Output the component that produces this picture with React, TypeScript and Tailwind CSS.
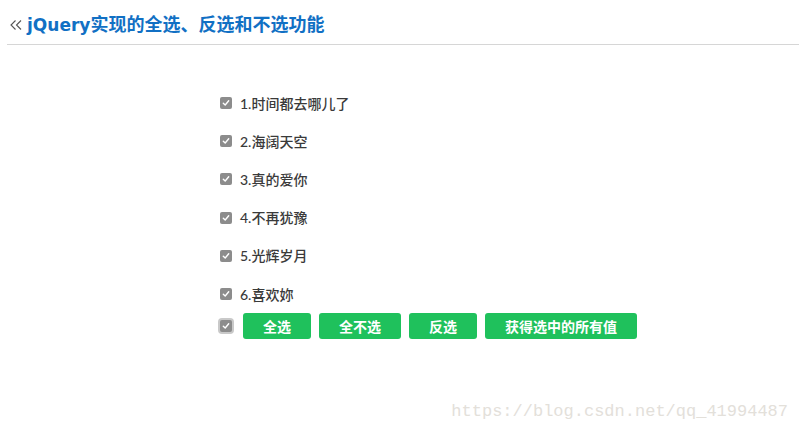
import React from "react";

const items = ["1.时间都去哪儿了", "2.海阔天空", "3.真的爱你", "4.不再犹豫", "5.光辉岁月", "6.喜欢妳"];
const buttons = ["全选", "全不选", "反选", "获得选中的所有值"];

function Check({ focused }: { focused?: boolean }) {
  const box = (
    <span className="flex h-[12px] w-[12px] items-center justify-center rounded-[2px] bg-[#8c8c8c]">
      <svg width="8" height="8" viewBox="0 0 8 8" fill="none">
        <path d="M1.3 4.2 L3.2 6 L6.7 1.8" stroke="white" strokeWidth="1.4" strokeLinecap="round" strokeLinejoin="round" />
      </svg>
    </span>
  );
  if (!focused) return box;
  return <span className="flex h-[16px] w-[16px] items-center justify-center rounded-[4px] bg-[#c9c9c9]">{box}</span>;
}

export default function App() {
  return (
    <div className="h-[437px] w-[799px] bg-white" style={{ fontFamily: '"Lato", "Noto Sans CJK SC", sans-serif' }}>
      <header className="ml-[7px] flex h-[45px] items-center border-b border-[#d6d6d6] pt-[6px] pb-[1px]">
        <svg className="ml-[3px] mr-[5px]" width="12" height="12" viewBox="0 0 12 12" fill="none">
          <path d="M5.5 1.5 L1 6 L5.5 10.5 M11 1.5 L6.5 6 L11 10.5" stroke="#555" strokeWidth="1.1" />
        </svg>
        <h1 className="text-[18px] font-bold text-[#1170c4]" style={{ fontFamily: '"Noto Sans CJK SC", sans-serif' }}>
          <span className="text-[17px]" style={{ fontFamily: '"DejaVu Sans", sans-serif' }}>jQuery</span>实现的全选、反选和不选功能
        </h1>
      </header>

      <div className="ml-[220px] mt-[39px] flex flex-col">
        {items.map((t) => (
          <div key={t} className="flex h-[38.2px] items-center gap-[8px]">
            <Check />
            <span className="text-[14px] font-medium text-[#3a3a3a]">{t}</span>
          </div>
        ))}
        <div className="-ml-[2px] flex items-center gap-[8px]">
          <Check focused />
          <div className="ml-[1px] flex gap-[8px]">
            {buttons.map((b) => (
              <button key={b} className="h-[26px] rounded-[3px] bg-[#1fc15c] px-[20px] text-[14px] font-bold text-white">
                {b}
              </button>
            ))}
          </div>
        </div>
      </div>

      <div className="mt-[60px] flex justify-end pr-[11px]">
        <span className="text-[17px] text-[#e3e0da]" style={{ fontFamily: '"Liberation Mono", "DejaVu Sans Mono", monospace' }}>
          https://blog.csdn.net/qq_41994487
        </span>
      </div>
    </div>
  );
}
